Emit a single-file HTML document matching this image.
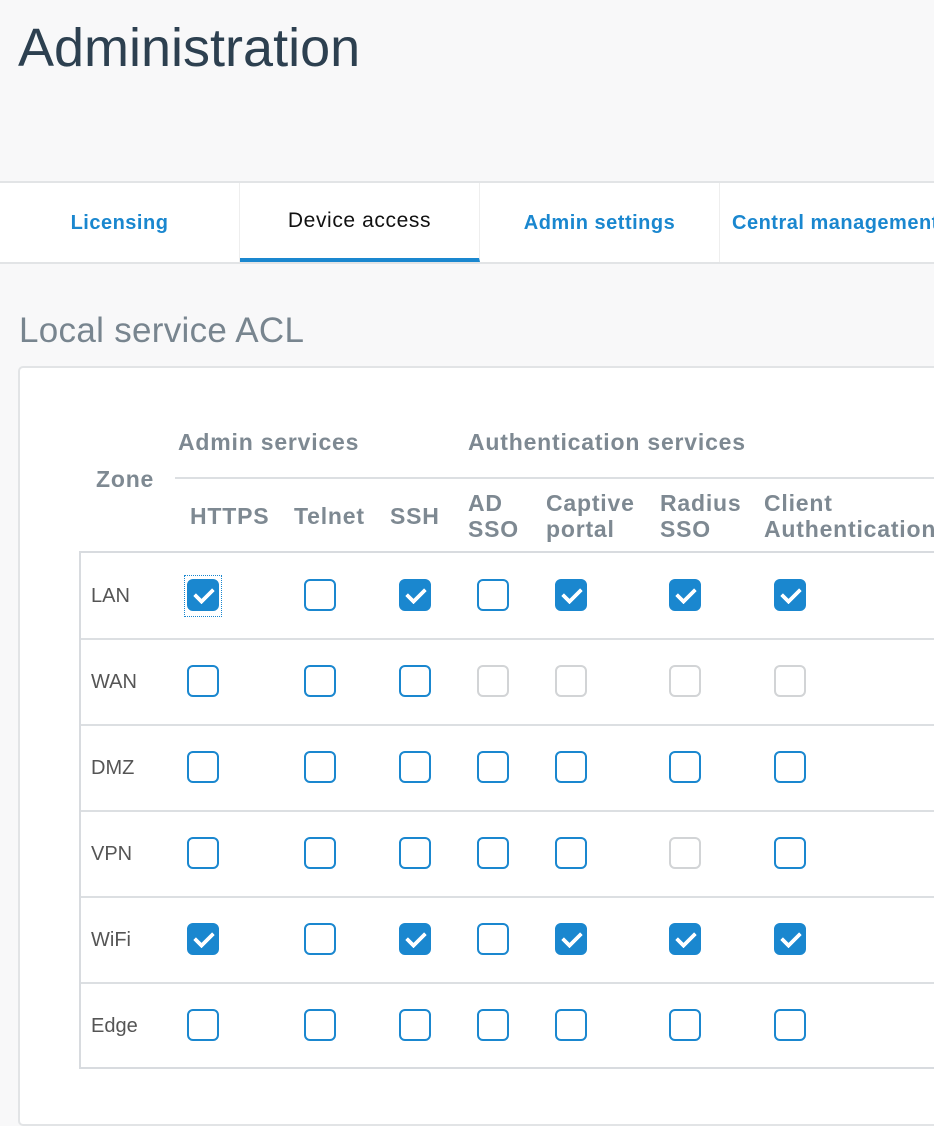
<!DOCTYPE html>
<html><head><meta charset="utf-8"><style>
*{margin:0;padding:0;box-sizing:border-box}
body{width:934px;height:1104px;overflow:hidden;background:#f8f8f9;font-family:"Liberation Sans",sans-serif;position:relative}
.a{position:absolute;white-space:nowrap}
.h1{left:18px;top:17px;font-size:54px;color:#2d4050;letter-spacing:0px}
.tabs{position:absolute;left:0;top:181px;width:934px;height:83px;background:#fff;border-top:2px solid #e2e4e6;border-bottom:2px solid #e2e4e6;overflow:hidden}
.tab{position:absolute;top:0;height:79px;width:240px;border-right:1px solid #eee;text-align:center;line-height:80px;font-size:20px;font-weight:bold;color:#1a87cf;letter-spacing:0.5px;white-space:nowrap}
.tab.act{color:#111;font-weight:normal;border-bottom:4px solid #1a87cf;line-height:76px;font-size:21px;letter-spacing:0.6px}
.h2{left:19px;top:311px;font-size:35px;color:#78858f;letter-spacing:0.3px}
.card{position:absolute;left:18px;top:366px;width:940px;height:760px;background:#fff;border:2px solid #e2e4e6;border-radius:5px}
.hd{color:#7e8992;font-size:23px;font-weight:bold;letter-spacing:0.8px}
.hl{position:absolute;left:175px;top:477px;width:760px;height:2px;background:#dcdfe2}
.tbl{position:absolute;left:79px;top:551px;width:870px;height:518px;border-left:2px solid #d8dbdf;border-bottom:2px solid #d8dbdf;border-top:2px solid #d8dbdf}
.row{position:absolute;left:81px;width:860px;height:2px;background:#dcdfe2}
.z{font-size:20px;color:#555;left:91px}
.cb{position:absolute;width:32px;height:32px;border:2.5px solid #1a87cf;border-radius:6px;background:#fff}
.cb.on{background:#1a87cf}
.cb.on::after{content:"";position:absolute;left:9px;top:3px;width:8px;height:15px;border:solid #fff;border-width:0 4px 4px 0;transform:rotate(45deg);border-radius:1px}
.cb.dis{border-color:#d2d4d6}
.focus{position:absolute;left:184px;top:575px;width:38px;height:42px;border:1.5px dotted #1a87cf}
</style></head><body>
<div class="a h1">Administration</div>
<div class="tabs">
<div class="tab" style="left:0">Licensing</div>
<div class="tab act" style="left:240px">Device access</div>
<div class="tab" style="left:480px">Admin settings</div>
<div class="tab" style="left:720px;width:260px;text-align:left;padding-left:12px">Central management</div>
</div>
<div class="a h2">Local service ACL</div>
<div class="card"></div>
<div class="a hd" style="left:178px;top:429px">Admin services</div>
<div class="a hd" style="left:468px;top:429px">Authentication services</div>
<div class="a hd" style="left:96px;top:466px">Zone</div>
<div class="hl"></div>
<div class="a hd" style="left:190px;top:503px">HTTPS</div>
<div class="a hd" style="left:294px;top:503px">Telnet</div>
<div class="a hd" style="left:390px;top:503px">SSH</div>
<div class="a hd" style="left:468px;top:490px;line-height:26px">AD<br>SSO</div>
<div class="a hd" style="left:546px;top:490px;line-height:26px">Captive<br>portal</div>
<div class="a hd" style="left:660px;top:490px;line-height:26px">Radius<br>SSO</div>
<div class="a hd" style="left:764px;top:490px;line-height:26px">Client<br>Authentication</div>
<div class="tbl"></div>
<div class="row" style="top:638px"></div>
<div class="row" style="top:724px"></div>
<div class="row" style="top:810px"></div>
<div class="row" style="top:896px"></div>
<div class="row" style="top:982px"></div>
<div class="a z" style="top:585px">LAN</div>
<div class="a z" style="top:671px">WAN</div>
<div class="a z" style="top:757px">DMZ</div>
<div class="a z" style="top:843px">VPN</div>
<div class="a z" style="top:929px">WiFi</div>
<div class="a z" style="top:1015px">Edge</div>
<div class="focus"></div>
<div class="cb on" style="left:187px;top:579px"></div>
<div class="cb" style="left:304px;top:579px"></div>
<div class="cb on" style="left:399px;top:579px"></div>
<div class="cb" style="left:477px;top:579px"></div>
<div class="cb on" style="left:555px;top:579px"></div>
<div class="cb on" style="left:669px;top:579px"></div>
<div class="cb on" style="left:774px;top:579px"></div>
<div class="cb" style="left:187px;top:665px"></div>
<div class="cb" style="left:304px;top:665px"></div>
<div class="cb" style="left:399px;top:665px"></div>
<div class="cb dis" style="left:477px;top:665px"></div>
<div class="cb dis" style="left:555px;top:665px"></div>
<div class="cb dis" style="left:669px;top:665px"></div>
<div class="cb dis" style="left:774px;top:665px"></div>
<div class="cb" style="left:187px;top:751px"></div>
<div class="cb" style="left:304px;top:751px"></div>
<div class="cb" style="left:399px;top:751px"></div>
<div class="cb" style="left:477px;top:751px"></div>
<div class="cb" style="left:555px;top:751px"></div>
<div class="cb" style="left:669px;top:751px"></div>
<div class="cb" style="left:774px;top:751px"></div>
<div class="cb" style="left:187px;top:837px"></div>
<div class="cb" style="left:304px;top:837px"></div>
<div class="cb" style="left:399px;top:837px"></div>
<div class="cb" style="left:477px;top:837px"></div>
<div class="cb" style="left:555px;top:837px"></div>
<div class="cb dis" style="left:669px;top:837px"></div>
<div class="cb" style="left:774px;top:837px"></div>
<div class="cb on" style="left:187px;top:923px"></div>
<div class="cb" style="left:304px;top:923px"></div>
<div class="cb on" style="left:399px;top:923px"></div>
<div class="cb" style="left:477px;top:923px"></div>
<div class="cb on" style="left:555px;top:923px"></div>
<div class="cb on" style="left:669px;top:923px"></div>
<div class="cb on" style="left:774px;top:923px"></div>
<div class="cb" style="left:187px;top:1009px"></div>
<div class="cb" style="left:304px;top:1009px"></div>
<div class="cb" style="left:399px;top:1009px"></div>
<div class="cb" style="left:477px;top:1009px"></div>
<div class="cb" style="left:555px;top:1009px"></div>
<div class="cb" style="left:669px;top:1009px"></div>
<div class="cb" style="left:774px;top:1009px"></div>
</body></html>
